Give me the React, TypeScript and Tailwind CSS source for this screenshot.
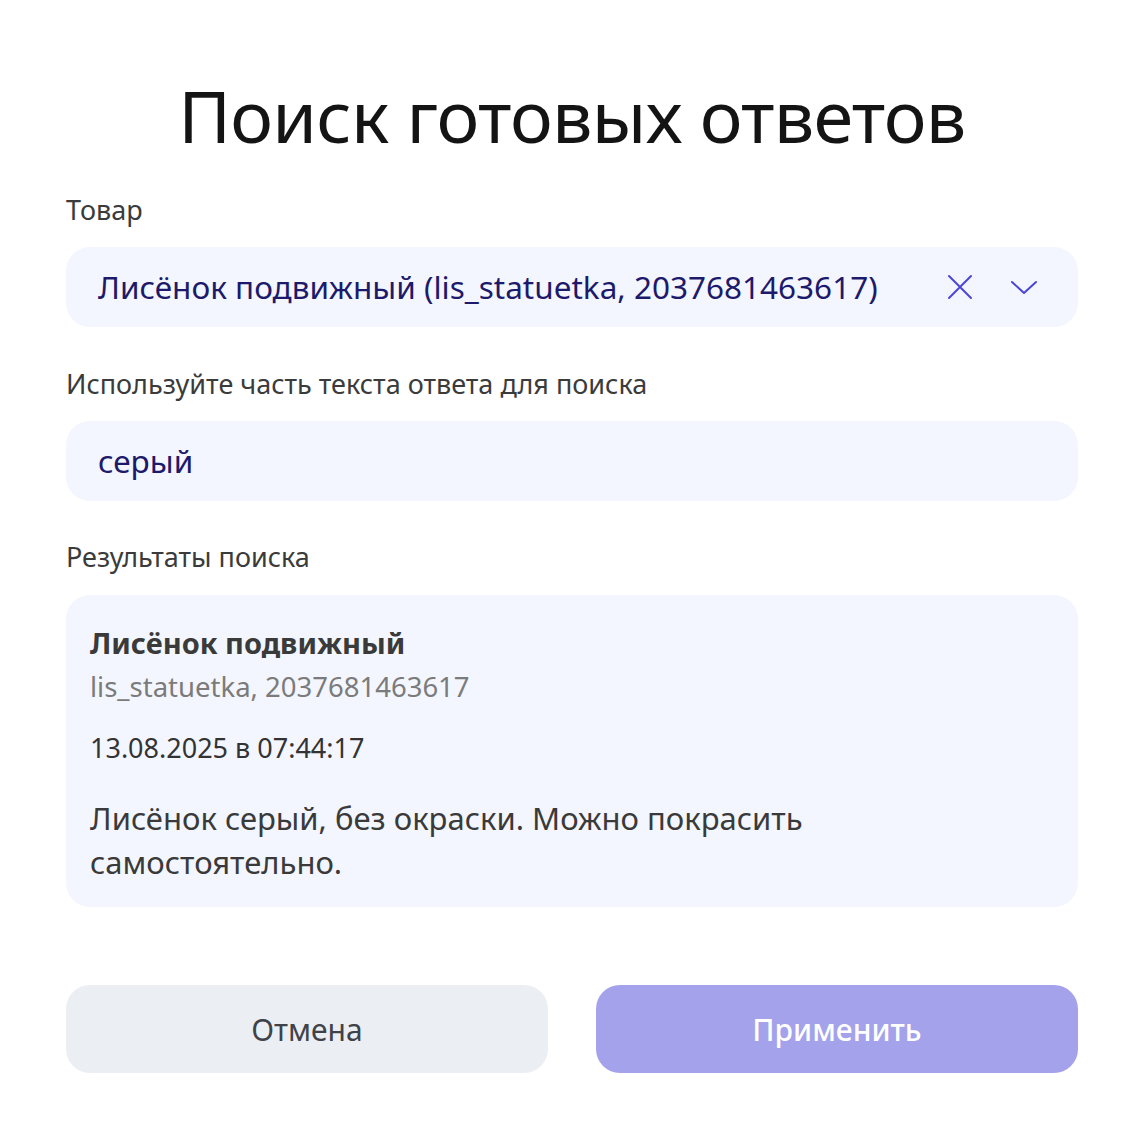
export default function App() {
  return (
    <div className="min-h-[1128px] w-full bg-white font-['Noto_Sans',sans-serif]">
      <div className="ml-[66px] w-[1012px] pt-[72px]">
        <h1 className="text-center text-[72px] leading-[86px] text-[#141414] tracking-[-0.75px]">
          Поиск готовых ответов
        </h1>

        {/* Товар */}
        <div className="mt-[34px] mb-[19px] text-[27px] leading-[36px] text-[#3b3b3b]">Товар</div>
        <div className="flex h-[80px] items-center rounded-[24px] bg-[#f3f6fe] pl-[32px] pr-[40px]">
          <span className="flex-1 text-[31.5px] text-[#1e1a6b]">
            Лисёнок подвижный (lis_statuetka, 2037681463617)
          </span>
          <svg width="26" height="26" viewBox="0 0 26 26" className="mr-[37px]">
            <path d="M2 2 L24 24 M24 2 L2 24" stroke="#4b45d4" strokeWidth="2" strokeLinecap="round" />
          </svg>
          <svg width="28" height="16" viewBox="0 0 28 16">
            <path d="M2 3 L14 14 L26 3" stroke="#4b45d4" strokeWidth="2" fill="none" strokeLinecap="round" strokeLinejoin="round" />
          </svg>
        </div>

        {/* Поиск */}
        <div className="mt-[39px] mb-[19px] text-[27px] leading-[36px] text-[#3b3b3b]">
          Используйте часть текста ответа для поиска
        </div>
        <div className="flex h-[80px] items-center rounded-[24px] bg-[#f3f6fe] px-[32px]">
          <span className="text-[31.5px] text-[#1e1a6b]">серый</span>
        </div>

        {/* Результаты */}
        <div className="mt-[38px] mb-[20px] text-[27px] leading-[36px] text-[#3b3b3b]">Результаты поиска</div>
        <div className="rounded-[24px] bg-[#f3f6fe] px-[24px] pt-[28px] pb-[23px]">
          <div className="text-[29px] font-bold leading-[40px] text-[#3a3a3a]">Лисёнок подвижный</div>
          <div className="text-[27.5px] leading-[48px] text-[#7b7b7b]">lis_statuetka, 2037681463617</div>
          <div className="mt-[17px] text-[27px] leading-[40px] text-[#333333]">13.08.2025 в 07:44:17</div>
          <div className="mt-[28px] w-[760px] text-[31px] leading-[44px] text-[#3a3a3a]">
            Лисёнок серый, без окраски. Можно покрасить самостоятельно.
          </div>
        </div>

        {/* Кнопки */}
        <div className="mt-[78px] grid grid-cols-2 gap-[48px]">
          <button className="h-[88px] rounded-[24px] bg-[#ebeef3] text-[30px] text-[#3f4249]">Отмена</button>
          <button className="h-[88px] rounded-[24px] bg-[#a3a2ea] text-[30px] font-medium text-white">Применить</button>
        </div>
      </div>
    </div>
  );
}
